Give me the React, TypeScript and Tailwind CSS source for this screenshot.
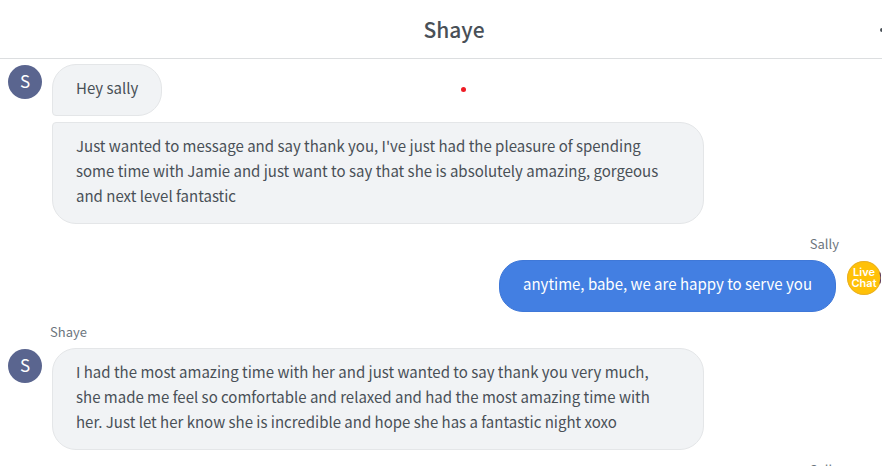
import type { ReactNode } from 'react';

type Shape = 'first' | 'last' | 'single';

interface Message {
  text: string;
  shape: Shape;
}

const shapes: Record<Shape, string> = {
  first: 'rounded-3xl rounded-bl-[4px] pr-[23px]',
  last: 'rounded-3xl rounded-tl-[4px] pr-8',
  single: 'rounded-3xl pr-8',
};

const shayeFirst: Message[] = [
  {
    text: 'Hey sally',
    shape: 'first',
  },
  {
    text: "Just wanted to message and say thank you, I've just had the pleasure of spending some time with Jamie and just want to say that she is absolutely amazing, gorgeous and next level fantastic",
    shape: 'last',
  },
];

const shayeSecond: Message[] = [
  {
    text: 'I had the most amazing time with her and just wanted to say thank you very much, she made me feel so comfortable and relaxed and had the most amazing time with her. Just let her know she is incredible and hope she has a fantastic night xoxo',
    shape: 'single',
  },
];

const InitialAvatar = ({ initial }: { initial: string }) => (
  <div className="mt-px flex size-[34px] shrink-0 items-center justify-center rounded-full bg-[#5a658f] pb-[3px] text-[17px] leading-none text-white">
    {initial}
  </div>
);

const LiveChatAvatar = () => (
  <svg
    viewBox="0 0 34 34"
    role="img"
    aria-label="Live Chat"
    className="mt-px size-[34px] shrink-0 font-['Inter',sans-serif] text-[11px] font-semibold"
  >
    <circle cx="17" cy="17" r="17" fill="#ffc107" />
    <circle cx="17" cy="17" r="16.5" fill="none" stroke="#d9a43a" strokeOpacity="0.6" />
    <path d="M33 11.5a16.5 16.5 0 0 1 0 11" fill="none" stroke="#5b3a63" strokeWidth="1" />
    <text x="17" y="15" textAnchor="middle" fill="#fff">
      Live
    </text>
    <text x="17" y="26" textAnchor="middle" fill="#fff">
      Chat
    </text>
  </svg>
);

const SenderName = ({ children }: { children: ReactNode }) => (
  <p className="pt-[10px] pb-[6px] text-[13px] leading-5 text-[#6c757d]">{children}</p>
);

const Received = ({ messages }: { messages: Message[] }) => (
  <div className="flex items-start gap-[10px]">
    <InitialAvatar initial="S" />
    <div className="flex max-w-[652px] flex-col items-start gap-[6px]">
      {messages.map((message) => (
        <p
          key={message.text}
          className={`border border-[#e4e6e8] bg-[#f1f3f5] pt-[10px] pb-[15px] pl-[23px] ${shapes[message.shape]}`}
        >
          {message.text}
        </p>
      ))}
    </div>
  </div>
);

const App = () => {
  return (
    <div className="h-screen overflow-hidden bg-white font-['Noto_Sans_CJK_SC',sans-serif] text-[15px] leading-[25px] text-[#495057]">
      <div className="relative w-[calc(100%+26px)]">
        <header className="grid grid-cols-[1fr_auto_1fr] items-center border-b border-[#dcdee0] py-[14px]">
          <h1 className="col-start-2 text-[21px] leading-[30px] font-medium">Shaye</h1>
          <button type="button" aria-label="More options" className="mr-3 flex gap-[2px] justify-self-end pt-[2px]">
            <span className="size-1 rounded-full bg-[#495057]" />
            <span className="size-1 rounded-full bg-[#495057]" />
            <span className="size-1 rounded-full bg-[#495057]" />
          </button>
        </header>

        <span className="absolute top-[87px] left-[461px] size-[5px] rounded-full bg-[#ee1c25]" />

        <main className="pt-[5px] pr-[27px] pl-2">
          <Received messages={shayeFirst} />

          <div className="pr-[42px] text-right">
            <SenderName>Sally</SenderName>
          </div>
          <div className="flex items-start justify-end gap-[11px]">
            <p className="rounded-3xl border border-[#3f78d8] bg-[#437fe2] px-[23px] pt-[10px] pb-[15px] text-white">
              anytime, babe, we are happy to serve you
            </p>
            <LiveChatAvatar />
          </div>

          <div className="pl-[42px]">
            <SenderName>Shaye</SenderName>
          </div>
          <Received messages={shayeSecond} />

          <div className="pr-[42px] text-right">
            <SenderName>Sally</SenderName>
          </div>
        </main>
      </div>
    </div>
  );
};

export default App;
